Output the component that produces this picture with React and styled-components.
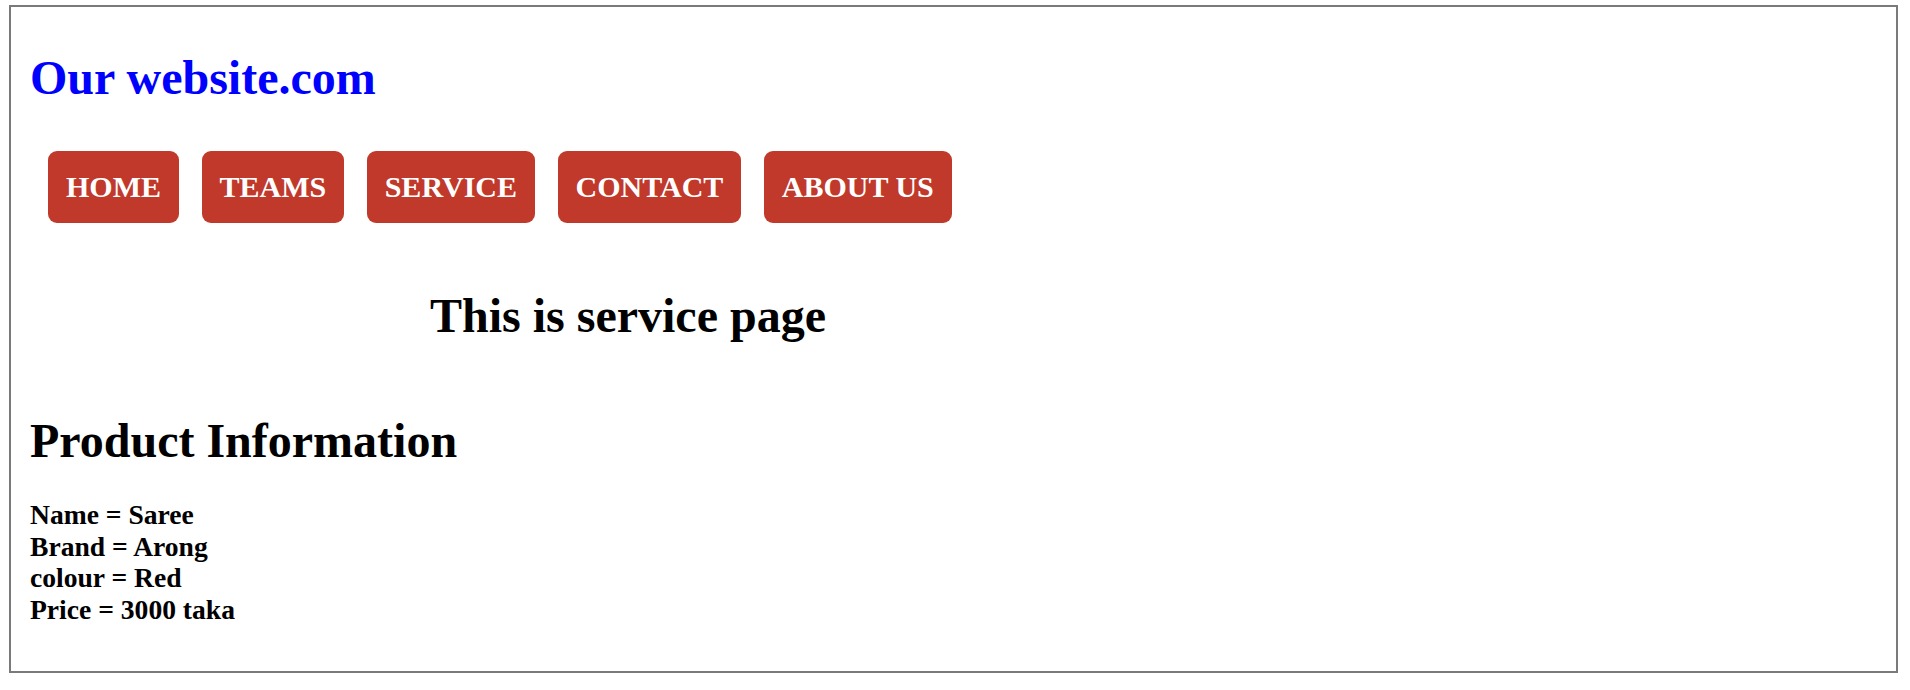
import React from "react";
import styled, { createGlobalStyle } from "styled-components";

const GlobalStyle = createGlobalStyle`
  body {
    margin: 0;
    background: #ffffff;
    font-family: "Liberation Serif", "Times New Roman", serif;
  }
`;

const Frame = styled.div`
  box-sizing: border-box;
  width: 1889px;
  height: 668px;
  margin: 5px 0 0 9px;
  border: 2px solid #7a7a7a;
  padding: 43px 19px 0 19px;
  display: flex;
  flex-direction: column;
`;

const SiteTitle = styled.h1`
  margin: 0;
  font-size: 48px;
  font-weight: bold;
  color: #0000ff;
`;

const Nav = styled.nav`
  display: flex;
  gap: 22.5px;
  margin: 46px 0 0 18px;
`;

const NavButton = styled.a`
  display: flex;
  align-items: center;
  height: 72px;
  padding: 0 18px;
  border-radius: 9px;
  background: #c0392b;
  color: #ffffff;
  font-size: 30px;
  font-weight: bold;
  text-decoration: none;
`;

const PageHeading = styled.h1`
  width: 1196px;
  margin: 65px 0 0 0;
  font-size: 48px;
  font-weight: bold;
  text-align: center;
  color: #000000;
`;

const SectionTitle = styled.h2`
  margin: 70px 0 0 0;
  font-size: 48px;
  font-weight: bold;
  color: #000000;
`;

const InfoList = styled.div`
  margin-top: 31px;
  display: flex;
  flex-direction: column;
`;

const InfoLine = styled.span`
  font-size: 27.6px;
  line-height: 31.5px;
  font-weight: bold;
  color: #000000;
`;

const links = ["HOME", "TEAMS", "SERVICE", "CONTACT", "ABOUT US"];

const info = [
  "Name = Saree",
  "Brand = Arong",
  "colour = Red",
  "Price = 3000 taka",
];

const App = () => {
  return (
    <>
      <GlobalStyle />
      <Frame>
        <SiteTitle>Our website.com</SiteTitle>
        <Nav>
          {links.map((l) => (
            <NavButton key={l} href="#">
              {l}
            </NavButton>
          ))}
        </Nav>
        <PageHeading>This is service page</PageHeading>
        <SectionTitle>Product Information</SectionTitle>
        <InfoList>
          {info.map((line) => (
            <InfoLine key={line}>{line}</InfoLine>
          ))}
        </InfoList>
      </Frame>
    </>
  );
};

export default App;
